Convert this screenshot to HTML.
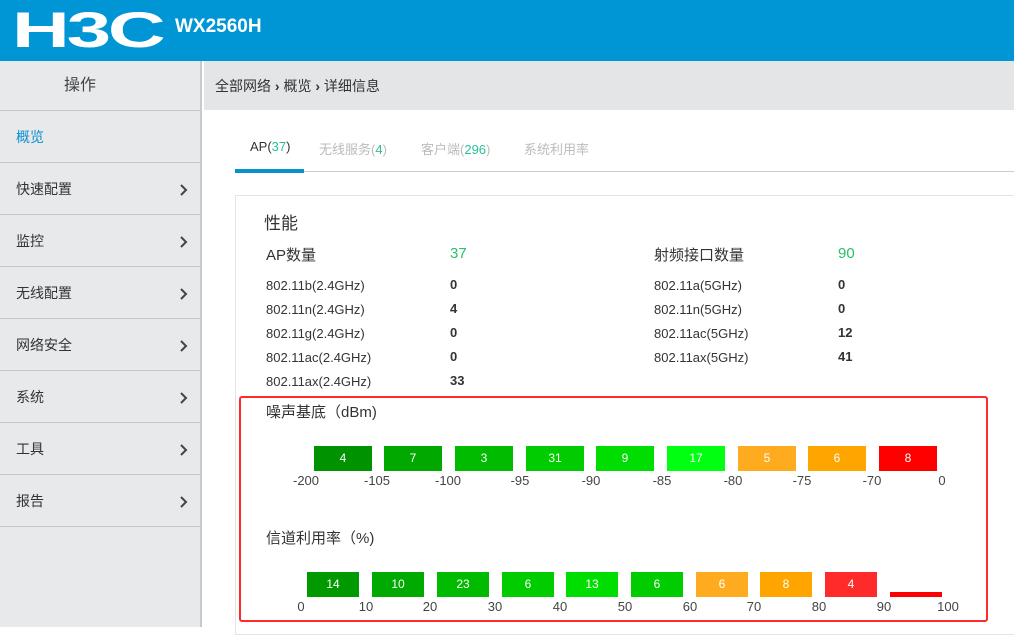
<!DOCTYPE html>
<html><head><meta charset="utf-8"><style>
*{margin:0;padding:0;box-sizing:border-box}
body{width:1014px;height:627px;overflow:hidden;background:#fff;font-family:"Liberation Sans","Noto Sans CJK SC",sans-serif;color:#333;position:relative}
.abs{position:absolute}
#hdr{left:0;top:0;width:1014px;height:61px;background:#0096d6}
#side{left:0;top:61px;width:202px;height:566px;background:#e8e9eb;border-right:2px solid #c8c9cb}
.it{position:absolute;left:0;width:200px;height:52px;border-top:1px solid #c6c7c9;font-size:14px;line-height:52px;padding-left:16px;color:#333}
.it svg{position:absolute;left:180px;top:21px}
#bc{left:204px;top:61px;width:810px;height:49px;background:#e4e5e7;font-size:14px;line-height:50px;padding-left:11px;color:#333}
.tab{position:absolute;top:139px;font-size:13px;color:#bbb}
.g{color:#2bbf9a}
.bar{position:absolute;height:25px;color:#fff;font-size:12px;text-align:center;line-height:25px}
.lb{position:absolute;font-size:13px;color:#444;transform:translateX(-50%)}
.t13{position:absolute;font-size:13px;color:#333}
.b{position:absolute;font-size:13px;font-weight:bold;color:#333}
</style></head><body>
<div id="hdr" class="abs">
<div class="abs" style="left:12px;top:5px;font:bold 50px/50px 'Liberation Sans',sans-serif;color:#fff;letter-spacing:-2px;transform:scaleX(1.6);transform-origin:left">H3C</div>
<div class="abs" style="left:175px;top:14px;font:bold 19px/26px 'Liberation Sans',sans-serif;color:#fff">WX2560H</div>
</div>
<div id="side" class="abs">
<div style="height:49px;line-height:49px;text-align:center;font-size:16px;color:#444;padding-right:40px">操作</div>
<div class="it" style="top:49px;color:#0a8fd0">概览</div>
<div class="it" style="top:101px">快速配置<svg width="8" height="12"><path d="M1 1l5 5-5 5" fill="none" stroke="#444" stroke-width="2"/></svg></div>
<div class="it" style="top:153px">监控<svg width="8" height="12"><path d="M1 1l5 5-5 5" fill="none" stroke="#444" stroke-width="2"/></svg></div>
<div class="it" style="top:205px">无线配置<svg width="8" height="12"><path d="M1 1l5 5-5 5" fill="none" stroke="#444" stroke-width="2"/></svg></div>
<div class="it" style="top:257px">网络安全<svg width="8" height="12"><path d="M1 1l5 5-5 5" fill="none" stroke="#444" stroke-width="2"/></svg></div>
<div class="it" style="top:309px">系统<svg width="8" height="12"><path d="M1 1l5 5-5 5" fill="none" stroke="#444" stroke-width="2"/></svg></div>
<div class="it" style="top:361px">工具<svg width="8" height="12"><path d="M1 1l5 5-5 5" fill="none" stroke="#444" stroke-width="2"/></svg></div>
<div class="it" style="top:413px">报告<svg width="8" height="12"><path d="M1 1l5 5-5 5" fill="none" stroke="#444" stroke-width="2"/></svg></div>
<div class="it" style="top:465px"></div>
</div>
<div id="bc" class="abs">全部网络 <b>›</b> 概览 <b>›</b> 详细信息</div>
<div class="tab" style="left:250px;color:#333">AP(<span class="g">37</span>)</div>
<div class="tab" style="left:319px">无线服务(<span class="g">4</span>)</div>
<div class="tab" style="left:421px">客户端(<span class="g">296</span>)</div>
<div class="tab" style="left:524px">系统利用率</div>
<div class="abs" style="left:235px;top:171px;width:779px;height:1px;background:#ccc"></div>
<div class="abs" style="left:235px;top:169px;width:69px;height:4px;background:#0a8fd0"></div>
<div class="abs" style="left:235px;top:195px;width:800px;height:440px;border:1px solid #e4e4e4"></div>
<div class="abs" style="left:264px;top:209px;font-size:17px;color:#333">性能</div>
<div class="abs" style="left:266px;top:244px;font-size:15px">AP数量</div>
<div class="abs" style="left:450px;top:245px;font-size:15px;color:#2bbf6a">37</div>
<div class="abs" style="left:654px;top:244px;font-size:15px">射频接口数量</div>
<div class="abs" style="left:838px;top:245px;font-size:15px;color:#2bbf6a">90</div>
<div class="t13" style="left:266px;top:278px">802.11b(2.4GHz)</div><div class="b" style="left:450px;top:277px">0</div>
<div class="t13" style="left:266px;top:302px">802.11n(2.4GHz)</div><div class="b" style="left:450px;top:301px">4</div>
<div class="t13" style="left:266px;top:326px">802.11g(2.4GHz)</div><div class="b" style="left:450px;top:325px">0</div>
<div class="t13" style="left:266px;top:350px">802.11ac(2.4GHz)</div><div class="b" style="left:450px;top:349px">0</div>
<div class="t13" style="left:266px;top:374px">802.11ax(2.4GHz)</div><div class="b" style="left:450px;top:373px">33</div>
<div class="t13" style="left:654px;top:278px">802.11a(5GHz)</div><div class="b" style="left:838px;top:277px">0</div>
<div class="t13" style="left:654px;top:302px">802.11n(5GHz)</div><div class="b" style="left:838px;top:301px">0</div>
<div class="t13" style="left:654px;top:326px">802.11ac(5GHz)</div><div class="b" style="left:838px;top:325px">12</div>
<div class="t13" style="left:654px;top:350px">802.11ax(5GHz)</div><div class="b" style="left:838px;top:349px">41</div>
<div class="abs" style="left:239px;top:396px;width:749px;height:226px;border:2px solid #ff2a2a;border-radius:3px"></div>
<div class="abs" style="left:266px;top:401px;font-size:15px">噪声基底（dBm)</div>
<div class="bar" style="left:314px;top:446px;width:58px;background:#009200">4</div>
<div class="bar" style="left:384px;top:446px;width:58px;background:#00a800">7</div>
<div class="bar" style="left:455px;top:446px;width:58px;background:#00bb00">3</div>
<div class="bar" style="left:526px;top:446px;width:58px;background:#00cc00">31</div>
<div class="bar" style="left:596px;top:446px;width:58px;background:#00dd00">9</div>
<div class="bar" style="left:667px;top:446px;width:58px;background:#00ff10">17</div>
<div class="bar" style="left:738px;top:446px;width:58px;background:#ffab20">5</div>
<div class="bar" style="left:808px;top:446px;width:58px;background:#ffa500">6</div>
<div class="bar" style="left:879px;top:446px;width:58px;background:#ff0000">8</div>
<div class="lb" style="left:306px;top:473px">-200</div><div class="lb" style="left:377px;top:473px">-105</div><div class="lb" style="left:448px;top:473px">-100</div><div class="lb" style="left:520px;top:473px">-95</div><div class="lb" style="left:591px;top:473px">-90</div><div class="lb" style="left:662px;top:473px">-85</div><div class="lb" style="left:733px;top:473px">-80</div><div class="lb" style="left:802px;top:473px">-75</div><div class="lb" style="left:872px;top:473px">-70</div><div class="lb" style="left:942px;top:473px">0</div>
<div class="abs" style="left:266px;top:527px;font-size:15px">信道利用率（%)</div>
<div class="bar" style="left:307px;top:572px;width:52px;background:#009a00">14</div>
<div class="bar" style="left:372px;top:572px;width:52px;background:#00aa00">10</div>
<div class="bar" style="left:437px;top:572px;width:52px;background:#00bb00">23</div>
<div class="bar" style="left:502px;top:572px;width:52px;background:#00cc00">6</div>
<div class="bar" style="left:566px;top:572px;width:52px;background:#00dd00">13</div>
<div class="bar" style="left:631px;top:572px;width:52px;background:#00cc00">6</div>
<div class="bar" style="left:696px;top:572px;width:52px;background:#ffab20">6</div>
<div class="bar" style="left:760px;top:572px;width:52px;background:#ffa500">8</div>
<div class="bar" style="left:825px;top:572px;width:52px;background:#ff2a2a">4</div>
<div class="bar" style="left:890px;top:592px;width:52px;height:5px;background:#ff0000"></div>
<div class="lb" style="left:301px;top:599px">0</div><div class="lb" style="left:366px;top:599px">10</div><div class="lb" style="left:430px;top:599px">20</div><div class="lb" style="left:495px;top:599px">30</div><div class="lb" style="left:560px;top:599px">40</div><div class="lb" style="left:625px;top:599px">50</div><div class="lb" style="left:690px;top:599px">60</div><div class="lb" style="left:754px;top:599px">70</div><div class="lb" style="left:819px;top:599px">80</div><div class="lb" style="left:884px;top:599px">90</div><div class="lb" style="left:948px;top:599px">100</div>
</body></html>
